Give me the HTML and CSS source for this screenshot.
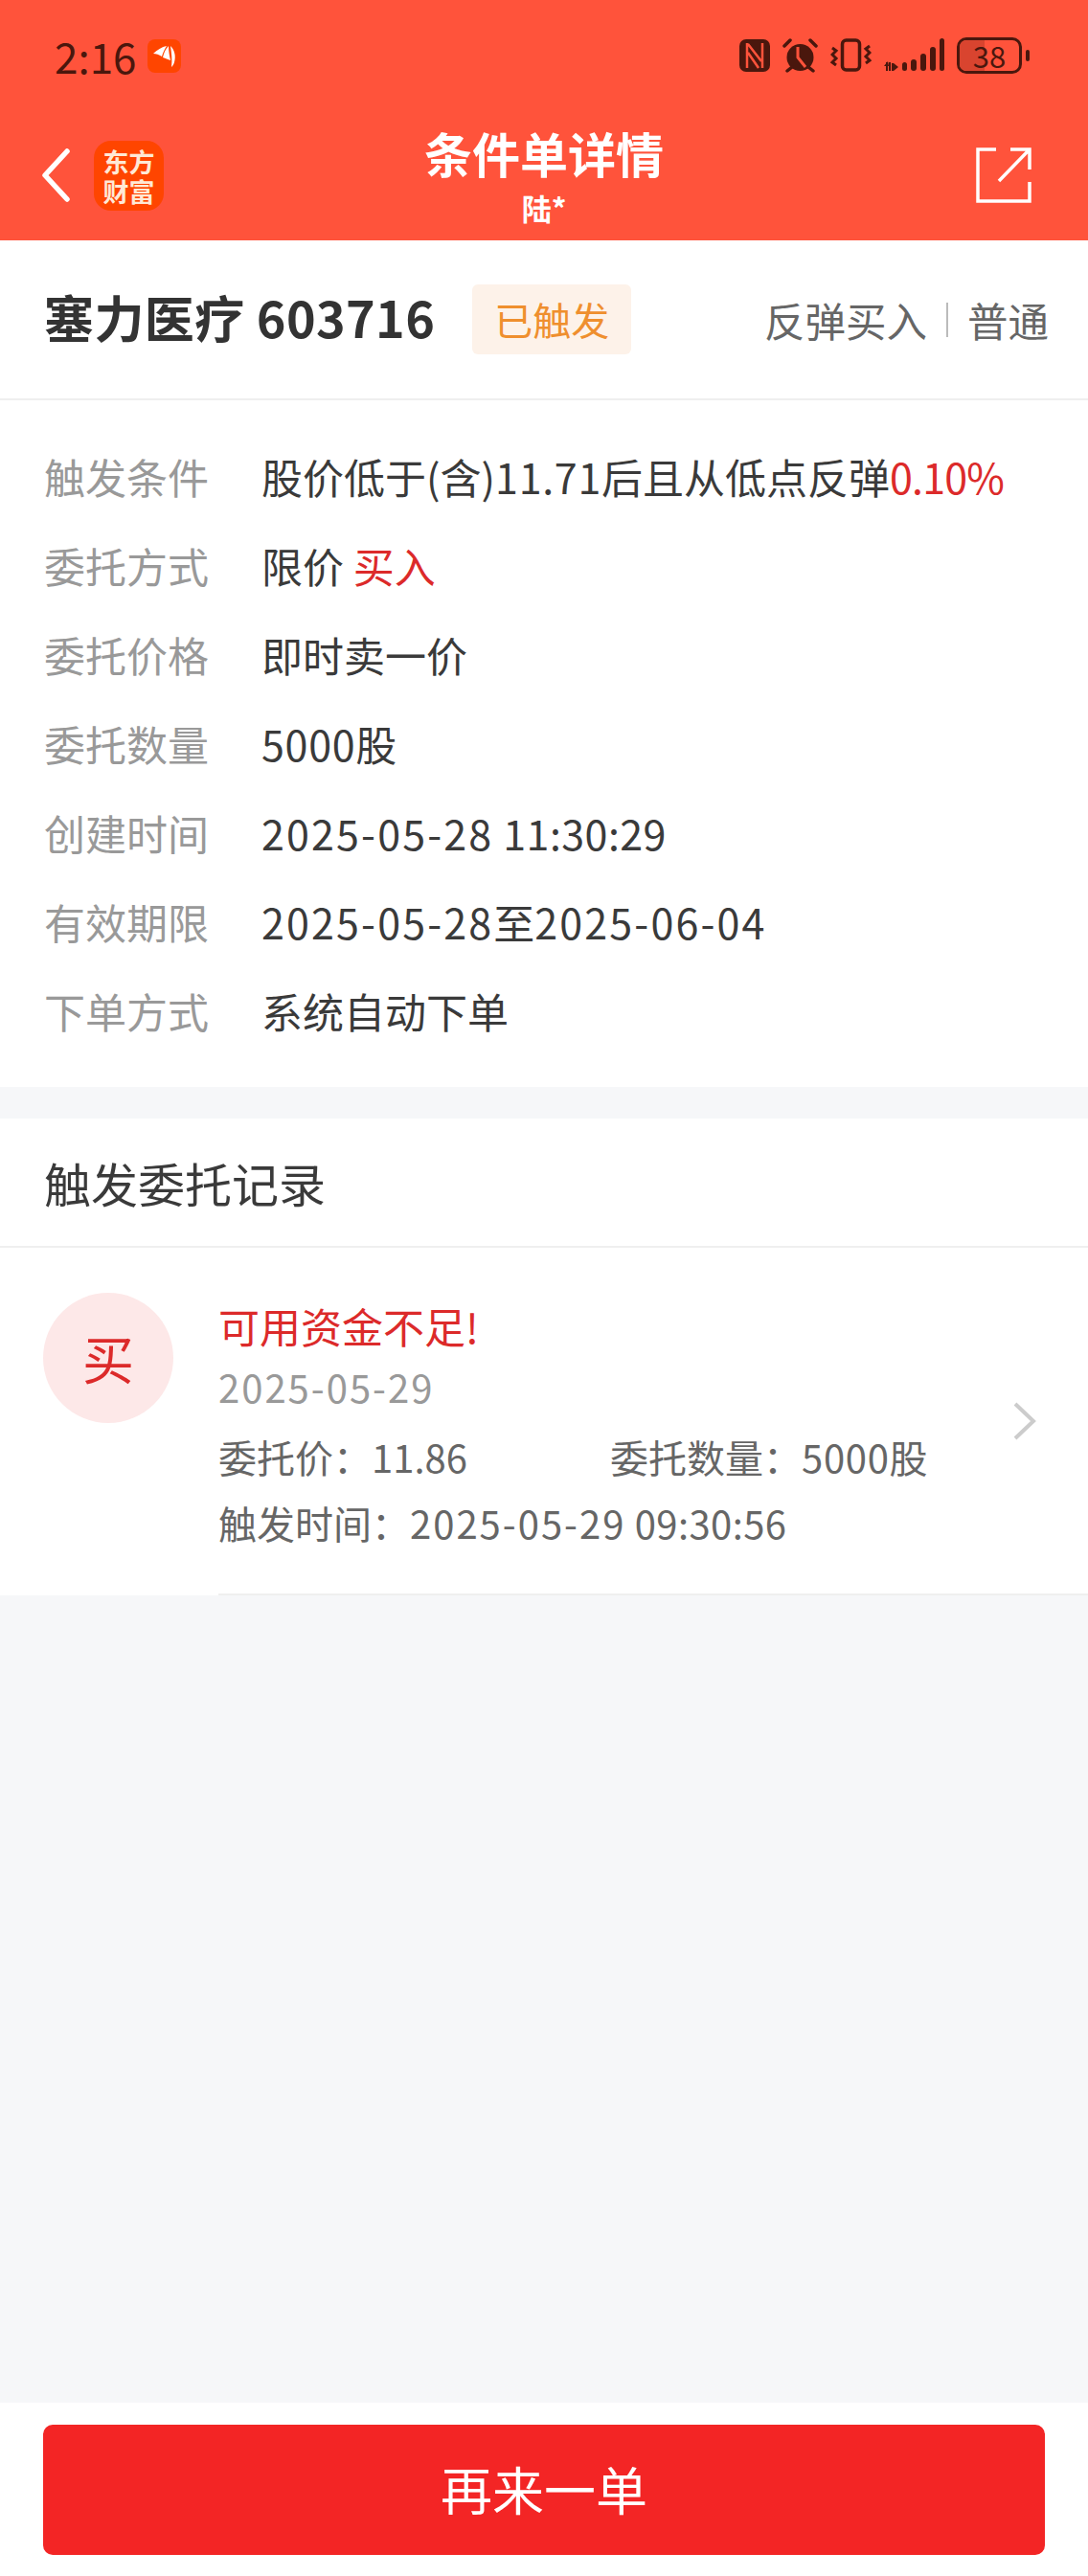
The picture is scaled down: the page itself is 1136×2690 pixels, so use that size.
FILE: index.html
```html
<!DOCTYPE html>
<html>
<head>
	<meta charset="utf-8">
	<title>条件单详情</title>
	<link rel="stylesheet" href="styles.css">
</head>
<body>
	<div class="page">
		<div class="header">
			<div class="status">
				<div class="status-left">
					<span class="time">2:16</span>
					<span class="app-dot">
						<svg width="35" height="35" viewBox="0 0 35 35"><path d="M6 15 C10 11 15 8 20 7 C18 10 16 14 15 18 C12 16 9 15 6 15 Z M16 19 C17 14 19 10 22 7 C22 12 23 18 24 22 C21 21 19 20 16 19 Z M24 7 C28 11 30 17 28 24 C27 27 26 28 25 29 C26 22 25 14 24 7 Z" fill="#fff"/></svg>
					</span>
				</div>
				<div class="status-right">
					<svg width="32" height="34" viewBox="0 0 32 34"><rect width="32" height="34" rx="7" fill="#4a170d"/><path d="M8 4 V30 M24 4 V30 M9 5 L23 23 M9 14 L20 30" stroke="#ff533b" stroke-width="2.500" fill="none"/></svg>
					<svg width="37" height="36" viewBox="0 0 37 36"><circle cx="18.500" cy="20" r="14" fill="#4a170d"/><path d="M2 8 L8 2 M35 8 L29 2 M5 34 L10 30 M32 34 L27 30" stroke="#4a170d" stroke-width="3.500" stroke-linecap="round"/><path d="M16 9 V20 L24 30" stroke="#ff533b" stroke-width="3" fill="none"/></svg>
					<svg width="43" height="36" viewBox="0 0 43 36"><rect x="12.500" y="2" width="18" height="31" rx="4" fill="none" stroke="#4a170d" stroke-width="3.500"/><path d="M2 10 L6 13 L2 17 L6 21 L2 25 L6 28 M41 8 L37 11 L41 15 L37 19 L41 23 L37 26" fill="none" stroke="#4a170d" stroke-width="3"/></svg>
					<svg width="63" height="36" viewBox="0 0 63 36"><path d="M3 25 L3 34 M6 25 V34 M9 26 V34" stroke="#4a170d" stroke-width="2"/><path d="M10 26 L15 30 L10 34 Z M0 29 L4 24 L5 29 Z" fill="#4a170d"/><rect x="19" y="25" width="5" height="9" rx="2.500" fill="#4a170d"/><rect x="28" y="22" width="6" height="12" rx="3" fill="#4a170d"/><rect x="38" y="16" width="6" height="18" rx="3" fill="#4a170d"/><rect x="48" y="9" width="6" height="25" rx="3" fill="#4a170d"/><rect x="58" y="0" width="5" height="34" rx="2.500" fill="#4a170d"/></svg>
					<div class="battery">
						<div class="battery-body"><span class="battery-fill"></span><span class="battery-num">38</span></div>
						<span class="battery-nub"></span>
					</div>
				</div>
			</div>
			<div class="nav">
				<div class="nav-left">
					<svg width="30" height="56" viewBox="0 0 30 56"><path d="M27 3 L4 28 L27 53" fill="none" stroke="#fff" stroke-width="5.500" stroke-linecap="round" stroke-linejoin="round"/></svg>
					<div class="logo">东方<br>财富</div>
				</div>
				<div class="nav-title">
					<div class="title">条件单详情</div>
					<div class="sub">陆*</div>
				</div>
				<svg class="share" width="58" height="60" viewBox="0 0 58 60"><path d="M21 3 H2 V57 H56 V37 M24 36 L55 4 M36 3 H56 V24" fill="none" stroke="#fff" stroke-width="3.500"/></svg>
			</div>
		</div>

		<div class="stock">
			<div class="stock-name">塞力医疗 603716</div>
			<span class="badge">已触发</span>
			<div class="stock-type"><span>反弹买入</span><i class="sep"></i><span>普通</span></div>
		</div>

		<div class="info">
			<div class="row"><span class="label">触发条件</span><span class="val">股价低于(含)<span class="num">11.71</span>后且从低点反弹<span class="red pct">0.10%</span></span></div>
			<div class="row"><span class="label">委托方式</span><span class="val">限价 <span class="red">买入</span></span></div>
			<div class="row"><span class="label">委托价格</span><span class="val">即时卖一价</span></div>
			<div class="row"><span class="label">委托数量</span><span class="val"><span class="num">5000</span>股</span></div>
			<div class="row"><span class="label">创建时间</span><span class="val"><span class="date">2025-05-28</span><span class="clock"> 11:30:29</span></span></div>
			<div class="row"><span class="label">有效期限</span><span class="val"><span class="date">2025-05-28</span>至<span class="date">2025-06-04</span></span></div>
			<div class="row"><span class="label">下单方式</span><span class="val">系统自动下单</span></div>
		</div>

		<div class="record">
			<div class="record-head">触发委托记录</div>
			<div class="record-item">
				<div class="buy-dot">买</div>
				<div class="record-body">
					<div class="record-title">可用资金不足!</div>
					<div class="record-date date">2025-05-29</div>
					<div class="record-line record-cols">
						<span class="col-a">委托价：11.86</span>
						<span>委托数量：<span class="num">5000</span>股</span>
					</div>
					<div class="record-line">触发时间：<span class="date">2025-05-29</span><span class="clock"> 09:30:56</span></div>
				</div>
				<svg class="arrow" width="24" height="40" viewBox="0 0 24 40"><path d="M2 2 L21 20 L2 38" fill="none" stroke="#cccccc" stroke-width="4"/></svg>
			</div>
		</div>

		<div class="bottom">
			<div class="btn">再来一单</div>
		</div>
	</div>
</body>
</html>
```

FILE: styles.css
```css
*{
	margin:0;
	padding:0;
	box-sizing:border-box;
}
body{
	font-family:"Noto Sans CJK SC","Noto Sans",sans-serif;
	background:#f6f7f9;
	color:#333;
}
.page{
	width:1136px;
	height:2690px;
	display:flex;
	flex-direction:column;
	overflow:hidden;
}
.header{
	height:251px;
	background:#ff533b;
	flex-shrink:0;
}
.status{
	height:93px;
	padding:38px 61px 0 57px;
	display:flex;
	justify-content:space-between;
	align-items:flex-start;
}
.status-left{
	display:flex;
	align-items:center;
	gap:11px;
	height:40px;
}
.time{
	font-size:44px;
	line-height:36px;
	color:#4a170d;
}
.app-dot{
	width:35px;
	height:35px;
	border-radius:8px;
	background:#ff4500;
	display:block;
}
.status-right{
	display:flex;
	align-items:center;
	height:40px;
}
.status-right svg{
	margin-right:13px;
}
.battery{
	display:flex;
	align-items:center;
	gap:4px;
}
.battery-body{
	width:68px;
	height:38px;
	border:3px solid #4a170d;
	border-radius:10px;
	display:flex;
	align-items:center;
	justify-content:center;
	position:relative;
}
.battery-fill{
	position:absolute;
	left:0;
	top:0;
	bottom:0;
	width:26px;
	background:#d9442f;
	border-radius:7px 0 0 7px;
}
.battery-num{
	position:relative;
	font-size:31px;
	line-height:32px;
	color:#4a170d;
}
.battery-nub{
	width:4px;
	height:12px;
	border-radius:2px;
	background:#4a170d;
}
.nav{
	height:158px;
	padding:22px 43px 0;
	display:grid;
	grid-template-columns:1fr auto 1fr;
	align-items:center;
}
.nav-left{
	display:flex;
	align-items:center;
	gap:25px;
}
.logo{
	width:73px;
	height:73px;
	border-radius:18px;
	background:#ff4500;
	color:#ffe9d6;
	font-size:27px;
	line-height:31px;
	font-weight:700;
	text-align:center;
	padding-top:6px;
}
.nav-title{
	text-align:center;
	color:#fff;
	font-weight:700;
	margin-bottom:5px;
}
.title{
	font-size:50px;
	line-height:68px;
}
.sub{
	font-size:31px;
	line-height:40px;
	margin-top:4px;
}
.share{
	justify-self:end;
	margin-right:16px;
}
.stock{
	height:167px;
	background:#fff;
	border-bottom:2px solid #efefef;
	padding:0 41px 0 46px;
	display:flex;
	align-items:center;
	flex-shrink:0;
}
.stock-name{
	font-size:52px;
	font-weight:700;
	letter-spacing:.4px;
	color:#333;
	margin-bottom:6px;
}
.badge{
	margin-left:39px;
	width:166px;
	height:73px;
	line-height:73px;
	text-align:center;
	font-size:40px;
	color:#ef8f2e;
	background:#fdf2e9;
	border-radius:6px;
}
.stock-type{
	margin-left:auto;
	display:flex;
	align-items:center;
	font-size:42.5px;
	color:#666;
}
.sep{
	width:2px;
	height:36px;
	background:#bbb;
	margin:0 20px;
}
.info{
	height:717px;
	background:#fff;
	padding-top:32px;
	flex-shrink:0;
}
.row{
	height:93px;
	padding-left:46px;
	display:flex;
	align-items:center;
	font-size:43px;
}
.label{
	width:227px;
	color:#999;
}
.val{
	color:#3a3a3a;
	white-space:nowrap;
}
.num{
	letter-spacing:.7px;
}
.date{
	letter-spacing:.05em;
}
.clock{
	letter-spacing:.01em;
}
.red{
	color:#dc2a2a;
}
.pct{
	letter-spacing:-.8px;
}
.record{
	margin-top:33px;
	background:#fff;
	flex-shrink:0;
}
.record-head{
	height:135px;
	line-height:133px;
	padding-left:46px;
	font-size:49px;
	color:#3a3a3a;
	border-bottom:2px solid #efefef;
}
.record-item{
	height:363px;
	padding:47px 0 0 45px;
	display:flex;
	position:relative;
}
.buy-dot{
	width:136px;
	height:136px;
	border-radius:50%;
	background:#fde8e8;
	color:#dc2a2a;
	font-size:54px;
	line-height:136px;
	text-align:center;
	flex-shrink:0;
}
.record-body{
	flex:1;
	margin-left:47px;
	height:316px;
	border-bottom:2px solid #efefef;
}
.record-title{
	font-size:43px;
	line-height:60px;
	margin-top:4px;
	color:#dc2a2a;
}
.record-date{
	font-size:40px;
	line-height:60px;
	color:#999;
	margin-top:4px;
}
.record-line{
	font-size:40px;
	line-height:60px;
	color:#666;
	margin-top:9px;
	white-space:nowrap;
}
.record-cols{
	display:flex;
	margin-top:13px;
}
.col-a{
	width:409px;
}
.arrow{
	position:absolute;
	left:1058px;
	top:161px;
}
.bottom{
	margin-top:auto;
	height:181px;
	background:#fff;
	padding:23px 45px 0;
	flex-shrink:0;
}
.btn{
	height:136px;
	line-height:134px;
	border-radius:10px;
	background:#f32525;
	color:#fff;
	font-size:54px;
	text-align:center;
}
```
